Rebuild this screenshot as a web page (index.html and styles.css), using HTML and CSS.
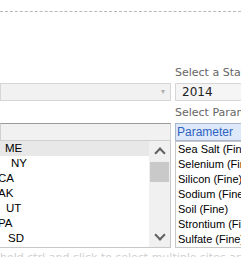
FILE: index.html
```html
<!DOCTYPE html>
<html lang="en">
  <head>
    <meta charset="UTF-8" />
    <title>Data Query</title>
    <link rel="stylesheet" href="styles.css">
  </head>
  <body>
    <hr class="rule" />

    <form class="query">
      <div class="col left">
        <div class="label">&nbsp;</div>
        <div class="select disabled"><span class="caret">&#9662;</span></div>
        <div class="label">&nbsp;</div>
        <div class="filter disabled"></div>
        <div class="list sites">
          <ul>
            <li class="selected"><span class="s1">ME</span></li>
            <li><span class="s2">NY</span></li>
            <li><span class="s3">CA</span></li>
            <li><span class="s3">AK</span></li>
            <li><span class="s4">UT</span></li>
            <li><span class="s3">PA</span></li>
            <li><span class="s5">SD</span></li>
          </ul>
          <div class="scrollbar">
            <span class="arrow up"></span>
            <span class="thumb"></span>
            <span class="arrow down"></span>
          </div>
        </div>
      </div>

      <div class="col right">
        <div class="label">Select a State</div>
        <div class="select">2014</div>
        <div class="label">Select Parameter</div>
        <div class="filter param">Parameter</div>
        <div class="list params">
          <ul>
            <li>Sea Salt (Fine)</li>
            <li>Selenium (Fine)</li>
            <li>Silicon (Fine)</li>
            <li>Sodium (Fine)</li>
            <li>Soil (Fine)</li>
            <li>Strontium (Fine)</li>
            <li>Sulfate (Fine)</li>
          </ul>
        </div>
      </div>
    </form>

    <p class="note">hold ctrl and click to select multiple sites and parameters</p>
  </body>
</html>
```

FILE: styles.css
```css
body {
  margin: 0;
  font-family: "DejaVu Sans", Verdana, sans-serif;
  background: #fff;
  overflow: hidden;
  width: 241px;
  height: 257px;
}

.rule {
  border: 0;
  border-top: 1px dashed #b8b8b8;
  margin: 11px 0 0;
  height: 0;
}

.query {
  display: flex;
  gap: 4px;
  margin-top: 53px;
}

.col {
  display: flex;
  flex-direction: column;
}

.left {
  width: 171px;
  flex-shrink: 0;
}

.right {
  width: 120px;
  flex-shrink: 0;
}

.label {
  font-size: 11px;
  color: #666;
  height: 18px;
  line-height: 16px;
  white-space: nowrap;
}

.select {
  height: 18px;
  box-sizing: border-box;
  border: 1px solid #d6d6d6;
  background: #f5f5f5;
  font-size: 12px;
  color: #222;
  padding-left: 6px;
  line-height: 16px;
  display: flex;
  align-items: center;
  margin-bottom: 4px;

  &.disabled {
    background: #f1f1f1;
    justify-content: flex-end;
    padding-right: 5px;
  }
}

.caret {
  color: #b0b0b0;
  font-size: 8px;
}

.filter {
  height: 18px;
  box-sizing: border-box;
  border: 1px solid #d0d0d0;
  border-top-color: #9a9a9a;

  &.disabled {
    background: #f1f1f1;
  }

  &.param {
    background: #dde9f8;
    border-color: #a8b8cc;
    color: #2f62c4;
    font-family: "Liberation Sans", Arial, sans-serif;
    font-size: 12px;
    line-height: 16px;
    padding-left: 1px;
  }
}

.list {
  height: 107px;
  box-sizing: border-box;
  border: 1px solid #c8c8c8;
  display: flex;
  overflow: hidden;
  font-family: "Liberation Sans", Arial, sans-serif;
  font-size: 11.5px;
  color: #000;

  ul {
    list-style: none;
    margin: 0;
    padding: 0;
    flex-grow: 1;
  }

  li {
    height: 15px;
    line-height: 15px;
    white-space: nowrap;
  }
}

.sites {
  border-left: 0;
  border-top: 0;

  li.selected {
    background: #e8e8e8;
  }

  .s1 { padding-left: 5px; }
  .s2 { padding-left: 11px; }
  .s3 { padding-left: 0; margin-left: -2px; }
  .s4 { padding-left: 6px; }
  .s5 { padding-left: 8px; }
}

.params {
  padding-left: 2px;
  font-size: 11px;
}

.scrollbar {
  width: 21px;
  background: #f0f0f0;
  display: flex;
  flex-direction: column;
  align-items: center;
}

.arrow {
  width: 6px;
  height: 6px;
  border: solid #606060;
  border-width: 2px 2px 0 0;

  &.up {
    transform: rotate(-45deg);
    margin-top: 8px;
  }

  &.down {
    transform: rotate(135deg);
    margin-top: auto;
    margin-bottom: 8px;
  }
}

.thumb {
  width: 19px;
  height: 20px;
  background: #c9c9c9;
  margin-top: 5px;
}

.note {
  margin: 3px 0 0;
  font-size: 11px;
  color: #d0d0d0;
  white-space: nowrap;
}
```
